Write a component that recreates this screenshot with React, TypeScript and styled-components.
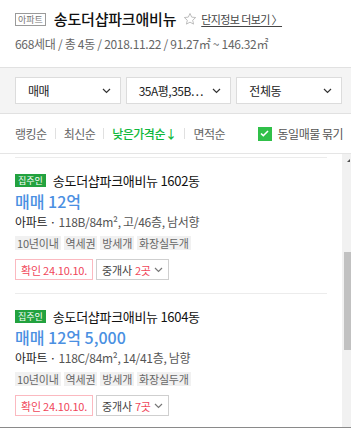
import styled, { createGlobalStyle } from 'styled-components'

const GlobalStyle = createGlobalStyle`
  html, body {
    margin: 0;
    padding: 0;
    background: #fff;
  }
  body {
    font-family: "Noto Sans CJK KR", "Noto Sans", sans-serif;
    color: #222;
    width: 351px;
    height: 428px;
    overflow: hidden;
  }
  * { box-sizing: border-box; }
`

const Header = styled.div`
  height: 68px;
  padding: 10px 15px 0;
  border-bottom: 1px solid #e1e1e1;
`

const TitleRow = styled.div`
  display: flex;
  align-items: center;
  height: 18px;
`

const TypeBadge = styled.span`
  display: inline-flex;
  align-items: center;
  height: 13px;
  padding: 0 2px;
  border: 1px solid #9a9a9a;
  font-size: 9px;
  color: #777;
  line-height: 1;
  margin-right: 8px;
`

const Title = styled.h1`
  margin: 0;
  font-size: 15px;
  font-weight: 500;
  letter-spacing: -0.2px;
  color: #111;
  line-height: 18px;
`

const Star = styled.svg`
  margin: 0 4px 0 7px;
`

const MoreLink = styled.a`
  font-size: 11px;
  letter-spacing: -0.6px;
  color: #444;
  text-decoration: underline;
  text-underline-offset: 2px;
`

const Meta = styled.div`
  margin-top: 8px;
  font-size: 12px;
  letter-spacing: -0.3px;
  color: #666;
  line-height: 16px;
`

const FilterBar = styled.div`
  display: flex;
  gap: 5px;
  padding: 9px 9px 9px 15px;
  background: #f4f4f4;
  border-bottom: 1px solid #e1e1e1;
`

const Select = styled.div`
  flex: 1;
  height: 27px;
  display: flex;
  align-items: center;
  justify-content: space-between;
  padding: 0 9px 0 12px;
  background: #fff;
  border: 1px solid #dcdcdc;
  font-size: 12px;
  letter-spacing: -0.5px;
  color: #222;
`

const SortBar = styled.div`
  height: 40px;
  display: flex;
  align-items: center;
  padding: 0 8px 0 15px;
  border-bottom: 1px solid #e5e5e5;
  font-size: 12px;
  letter-spacing: -0.5px;
`

const SortItem = styled.span<{ $active?: boolean }>`
  color: ${p => (p.$active ? '#10b83c' : '#666')};
  font-weight: ${p => (p.$active ? 500 : 400)};
`

const Divider = styled.span`
  width: 1px;
  height: 11px;
  background: #e0e0e0;
  margin: 0 8px;
`

const Check = styled.span`
  margin-left: auto;
  display: inline-flex;
  align-items: center;
  gap: 6px;
  color: #555;
`

const CheckBox = styled.span`
  width: 14px;
  height: 14px;
  background: #30c049;
  display: inline-flex;
  align-items: center;
  justify-content: center;
`

const ListArea = styled.div`
  display: flex;
  height: 274px;
  border-bottom: 1px solid #8a8a8a;
  overflow: hidden;
`

const List = styled.div`
  flex: 1;
  padding: 3px 15px 0;
`

const Item = styled.div`
  border-top: 1px solid #ececec;
  padding: 14px 0 13px;
`

const ItemTitleRow = styled.div`
  display: flex;
  align-items: center;
  height: 16px;
`

const OwnerBadge = styled.span`
  display: inline-flex;
  align-items: center;
  height: 13px;
  padding: 0 3px;
  background: #23a23f;
  color: #fff;
  font-size: 9px;
  margin-right: 7px;
`

const ItemTitle = styled.span`
  font-size: 13px;
  letter-spacing: -0.3px;
  color: #111;
`

const Price = styled.div`
  margin-top: 2px;
  height: 22px;
  line-height: 22px;
  font-size: 16px;
  font-weight: 500;
  color: #4a90e2;
`

const Info = styled.div`
  height: 20px;
  line-height: 20px;
  font-size: 12px;
  letter-spacing: -0.3px;
  color: #555;

  b {
    font-weight: 400;
    color: #222;
  }
`

const Tags = styled.div`
  margin-top: 4px;
  display: flex;
  gap: 3px;
`

const Tag = styled.span`
  height: 14px;
  line-height: 14px;
  padding: 0 2px;
  background: #f1f1f1;
  font-size: 11px;
  letter-spacing: -0.2px;
  color: #666;
`

const Actions = styled.div`
  margin-top: 9px;
  display: flex;
  gap: 3px;
`

const ActionBox = styled.span<{ $confirm?: boolean }>`
  height: 21px;
  display: inline-flex;
  align-items: center;
  gap: 3px;
  padding: 0 5px;
  border: 1px solid ${p => (p.$confirm ? '#fbb9c0' : '#cfcfcf')};
  color: ${p => (p.$confirm ? '#f0465a' : '#444')};
  font-size: 11px;
  letter-spacing: -0.2px;
`

const Count = styled.span`
  color: #f0465a;
`

const ScrollTrack = styled.div`
  width: 9px;
  background: #f1f1f1;
  display: flex;
  flex-direction: column;
  align-items: flex-end;
`

const ScrollArrow = styled.span`
  margin-top: 5px;
  width: 0;
  height: 0;
  border-left: 3px solid transparent;
  border-bottom: 3px solid #505050;
  margin-right: 1px;
`

const ScrollThumb = styled.div`
  margin-top: 90px;
  width: 7px;
  height: 98px;
  background: #c1c1c1;
`

const Chevron = ({ color = '#333' }: { color?: string }) => (
  <svg width="9" height="6" viewBox="0 0 9 6">
    <path d="M1 1l3.5 3.5L8 1" fill="none" stroke={color} strokeWidth="1.2" />
  </svg>
)

const listings = [
  { dong: '1602동', price: '매매 12억', info: '118B/84m², 고/46층, 남서향', agents: 2 },
  { dong: '1604동', price: '매매 12억 5,000', info: '118C/84m², 14/41층, 남향', agents: 7 },
]

const tags = ['10년이내', '역세권', '방세개', '화장실두개']

export default function App() {
  return (
    <>
      <GlobalStyle />
      <Header>
        <TitleRow>
          <TypeBadge>아파트</TypeBadge>
          <Title>송도더샵파크애비뉴</Title>
          <Star width="14" height="14" viewBox="0 0 24 24">
            <path
              d="M12 2.5l2.9 6.3 6.8.7-5.1 4.6 1.5 6.7L12 17.4l-6.1 3.4 1.5-6.7-5.1-4.6 6.8-.7z"
              fill="none"
              stroke="#b5b5b5"
              strokeWidth="1.5"
              strokeLinejoin="round"
            />
          </Star>
          <MoreLink>단지정보 더보기 〉</MoreLink>
        </TitleRow>
        <Meta>668세대 / 총 4동 / 2018.11.22 / 91.27㎡ ~ 146.32㎡</Meta>
      </Header>

      <FilterBar>
        <Select>매매<Chevron /></Select>
        <Select>35A평,35B⋯<Chevron /></Select>
        <Select>전체동<Chevron /></Select>
      </FilterBar>

      <SortBar>
        <SortItem>랭킹순</SortItem>
        <Divider />
        <SortItem>최신순</SortItem>
        <Divider />
        <SortItem $active>낮은가격순↓</SortItem>
        <Divider />
        <SortItem>면적순</SortItem>
        <Check>
          <CheckBox>
            <svg width="9" height="7" viewBox="0 0 9 7">
              <path d="M1 3.5l2.3 2.2L8 1" fill="none" stroke="#fff" strokeWidth="1.6" />
            </svg>
          </CheckBox>
          동일매물 묶기
        </Check>
      </SortBar>

      <ListArea>
        <List>
          {listings.map(l => (
            <Item key={l.dong}>
              <ItemTitleRow>
                <OwnerBadge>집주인</OwnerBadge>
                <ItemTitle>송도더샵파크애비뉴 {l.dong}</ItemTitle>
              </ItemTitleRow>
              <Price>{l.price}</Price>
              <Info><b>아파트 ·</b> {l.info}</Info>
              <Tags>
                {tags.map(t => <Tag key={t}>{t}</Tag>)}
              </Tags>
              <Actions>
                <ActionBox $confirm>확인 24.10.10.</ActionBox>
                <ActionBox>
                  중개사 <Count>{l.agents}곳</Count>
                  <Chevron color="#777" />
                </ActionBox>
              </Actions>
            </Item>
          ))}
        </List>
        <ScrollTrack>
          <ScrollArrow />
          <ScrollThumb />
        </ScrollTrack>
      </ListArea>
    </>
  )
}
